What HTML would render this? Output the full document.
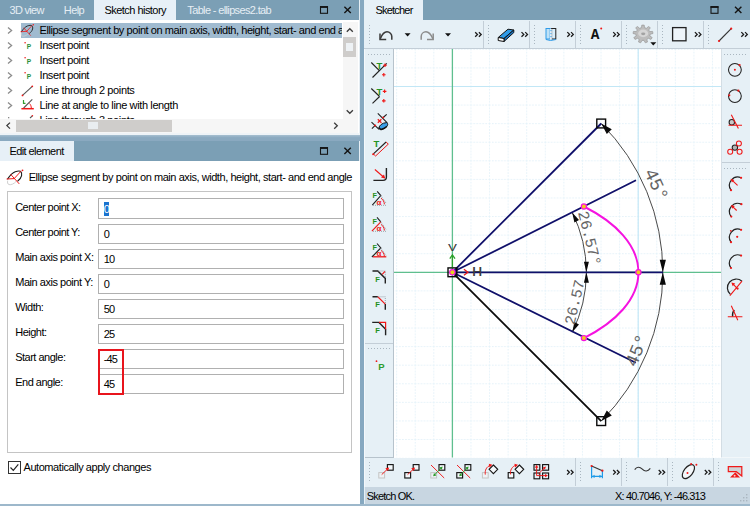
<!DOCTYPE html>
<html><head><meta charset="utf-8"><title>Sketcher</title>
<style>
html,body{margin:0;padding:0}
body{width:750px;height:506px;position:relative;overflow:hidden;background:#86a8c0;font-family:"Liberation Sans",sans-serif;font-size:11px;color:#000}
.a{position:absolute}
.t{position:absolute;white-space:nowrap;line-height:14px;height:14px;font-size:11px;letter-spacing:-0.44px}
.tabbar{position:absolute;background:#7b9fb5;height:20px}
.sel{position:absolute;top:0;height:20px;background:#e7f0f7}
.lt{color:#e6eef4}
.inp{position:absolute;left:98px;width:245.5px;height:20px;box-sizing:border-box;border:1px solid #b0b0b0;background:#fff}
svg{position:absolute;left:0;top:0;overflow:visible}
</style></head><body>

<!-- ============ LEFT TOP: tab bar + tree ============ -->
<div class="a" style="left:358.5px;top:0;width:1.9px;height:504px;background:#e6eef4"></div>
<div class="tabbar" style="left:0;top:0;width:358.5px"></div>
<div class="sel" style="left:94px;width:82px"></div>
<div class="t lt" style="left:9.6px;top:3px;letter-spacing:-0.73px">3D view</div>
<div class="t lt" style="left:63.8px;top:3px;letter-spacing:-0.61px">Help</div>
<div class="t" style="left:104.5px;top:3px;letter-spacing:-0.54px">Sketch history</div>
<div class="t lt" style="left:187.3px;top:3px;letter-spacing:-0.64px">Table - ellipses2.tab</div>

<div class="a" style="left:0;top:20px;width:358.6px;height:113px;background:#fff"></div>
<div class="a" style="left:21px;top:23px;width:321px;height:15px;background:#a0bbd0"></div>
<div class="a" style="left:39px;top:23px;width:303px;height:15px;overflow:hidden"><div class="t" style="left:0.5px;top:-0.5px;letter-spacing:-0.44px">Ellipse segment by point on main axis, width, height, start- and end angle</div></div>
<div class="t" style="left:39.5px;top:37.5px;letter-spacing:-0.41px">Insert point</div>
<div class="t" style="left:39.5px;top:52.5px;letter-spacing:-0.41px">Insert point</div>
<div class="t" style="left:39.5px;top:67.5px;letter-spacing:-0.41px">Insert point</div>
<div class="t" style="left:39.5px;top:82.5px;letter-spacing:-0.37px">Line through 2 points</div>
<div class="t" style="left:39.5px;top:97.5px;letter-spacing:-0.38px">Line at angle to line with length</div>
<div class="a" style="left:0;top:113px;width:342px;height:6px;overflow:hidden"><div class="t" style="left:39.5px;top:0.3px;letter-spacing:-0.37px">Line through 3 points</div></div>

<!-- scrollbars -->
<div class="a" style="left:343px;top:22px;width:15px;height:97px;background:#f6f6f6"></div>
<div class="a" style="left:343px;top:37px;width:13px;height:20px;background:#cfcdcb"></div>
<div class="a" style="left:346px;top:43px;width:7px;height:8px;background:#eef2f5"></div>
<div class="a" style="left:0;top:118.8px;width:358px;height:14.2px;background:#f6f6f6"></div>
<div class="a" style="left:16px;top:119.5px;width:156px;height:12.2px;background:#cfcdcb"></div>
<div class="a" style="left:88px;top:121.5px;width:10px;height:7.5px;background:#e9edf0"></div>

<!-- splitter -->
<div class="a" style="left:0;top:133px;width:360.4px;height:3px;background:#eef3f7"></div>
<div class="a" style="left:0;top:135.4px;width:360.4px;height:5.6px;background:linear-gradient(#a6bfd0,#8aa9c0 45%)"></div>

<!-- ============ EDIT ELEMENT ============ -->
<div class="tabbar" style="left:0;top:141px;width:358.5px"></div>
<div class="sel" style="left:0;top:141px;width:74px"></div>
<div class="t" style="left:9.4px;top:144px;letter-spacing:-0.57px">Edit element</div>
<div class="a" style="left:0;top:161px;width:359.6px;height:343px;background:#fff"></div>
<div class="t" style="left:28.7px;top:169.5px;letter-spacing:-0.44px">Ellipse segment by point on main axis, width, height, start- and end angle</div>
<div class="a" style="left:7px;top:191px;width:345px;height:262px;box-sizing:border-box;border:1px solid #c4c4c4"></div>

<div class="t" style="left:15.2px;top:199.5px;letter-spacing:-0.53px">Center point X:</div>
<div class="t" style="left:15.2px;top:224.5px;letter-spacing:-0.53px">Center point Y:</div>
<div class="t" style="left:15.2px;top:249.5px;letter-spacing:-0.47px">Main axis point X:</div>
<div class="t" style="left:15.2px;top:274.5px;letter-spacing:-0.47px">Main axis point Y:</div>
<div class="t" style="left:15.2px;top:299.5px;letter-spacing:-0.5px">Width:</div>
<div class="t" style="left:15.2px;top:324.5px;letter-spacing:-0.5px">Height:</div>
<div class="t" style="left:15.2px;top:349.5px;letter-spacing:-0.5px">Start angle:</div>
<div class="t" style="left:15.2px;top:374.5px;letter-spacing:-0.5px">End angle:</div>

<div class="inp" style="top:198px;height:21px"></div>
<div class="inp" style="top:224px"></div>
<div class="inp" style="top:249px"></div>
<div class="inp" style="top:274px"></div>
<div class="inp" style="top:299px"></div>
<div class="inp" style="top:324px"></div>
<div class="inp" style="top:349px"></div>
<div class="inp" style="top:374px"></div>
<div class="a" style="left:103.5px;top:202px;width:5px;height:13.5px;background:#1a74d0"></div>
<div class="t" style="left:103.7px;top:201.5px;color:#fff;letter-spacing:-0.8px">0</div>
<div class="t" style="left:103.7px;top:226.5px;letter-spacing:-0.8px">0</div>
<div class="t" style="left:103.7px;top:251.5px;letter-spacing:-0.8px">10</div>
<div class="t" style="left:103.7px;top:276.5px;letter-spacing:-0.8px">0</div>
<div class="t" style="left:103.7px;top:301.5px;letter-spacing:-0.8px">50</div>
<div class="t" style="left:103.7px;top:326.5px;letter-spacing:-0.8px">25</div>
<div class="t" style="left:103.7px;top:351.5px;letter-spacing:-0.8px">-45</div>
<div class="t" style="left:103.7px;top:376.5px;letter-spacing:-0.8px">45</div>
<div class="a" style="left:97.5px;top:348.5px;width:26px;height:46px;box-sizing:border-box;border:2px solid #e8141c"></div>

<div class="a" style="left:8px;top:461px;width:13px;height:13px;box-sizing:border-box;border:1px solid #333;background:#fff"></div>
<div class="t" style="left:23.5px;top:460px;letter-spacing:-0.44px">Automatically apply changes</div>

<!-- ============ RIGHT PANEL ============ -->
<div class="a" style="left:364px;top:0;width:386px;height:504px;background:#e6f0f6"></div>
<div class="tabbar" style="left:365px;top:0;width:385px"></div>
<div class="sel" style="left:365px;width:58px"></div>
<div class="t" style="left:375.5px;top:3px;letter-spacing:-0.8px">Sketcher</div>
<!-- canvas -->
<div class="a" style="left:394px;top:49px;width:327px;height:408.5px;background:#fff"></div>
<!-- status bar -->
<div class="a" style="left:365px;top:487px;width:385px;height:17px;background:#c8d6e1"></div>
<div class="t" style="left:366.8px;top:489px;letter-spacing:-0.83px">Sketch OK.</div>
<div class="t" style="left:615.1px;top:489px;letter-spacing:-0.88px">X: 40.7046, Y: -46.313</div>
<!-- bottom strip -->
<div class="a" style="left:0;top:504px;width:750px;height:2px;background:#9db8cb"></div>

<svg width="750" height="506" viewBox="0 0 750 506" font-family="Liberation Sans, sans-serif">
<defs>
  <pattern id="grid" x="451.9" y="271.8" width="18.58" height="18.58" patternUnits="userSpaceOnUse">
    <path d="M0 0.5H18.58M0.5 0V18.58" stroke="#e2f1f9" stroke-width="1" stroke-dasharray="1.5 1.5" fill="none"/>
  </pattern>
  <clipPath id="cv"><rect x="394" y="49" width="327" height="408.5"/></clipPath>
  <g id="icoEll" fill="none" stroke-linecap="round">
    <path d="M7.7 178.9C10 175.5 12.5 172.8 15.2 171.8C17.5 171 19.5 170.9 20.4 171.3C21.8 172.3 21.9 174 21.6 175.6C21 178 19.5 179.8 17.8 181" stroke="#1a1a1a" stroke-width="1.1"/>
    <path d="M16 181.5C14 184 11 185 9 184.6C7.5 184 7.3 182.5 7.6 181" stroke="#d0d0d0" stroke-width="1"/>
    <path d="M20.7 171.5L14.2 178.6M7 179L14.2 178.6M10.7 174.4L19 183.6" stroke="#f01818" stroke-width="1"/>
    <circle cx="22.5" cy="170.3" r="0.9" fill="#f01818" stroke="none"/>
  </g>
  <g id="maxi" fill="none" stroke="#141414"><rect x="0.5" y="0.5" width="7" height="6.5" stroke-width="1.1"/><path d="M0 0.7H8" stroke-width="1.8"/></g>
  <g id="clos" fill="none" stroke="#141414" stroke-width="1.4"><path d="M0 0L6.4 6.2M6.4 0L0 6.2"/></g>
  <g id="chev" fill="none" stroke="#8c8c8c" stroke-width="1.3"><path d="M0 -3L3.6 0L0 3"/></g>
  <g id="more" fill="none" stroke="#1a1a1a" stroke-width="1.3"><path d="M-3.5 -2.3L-1.2 0L-3.5 2.3M0.2 -2.3L2.5 0L0.2 2.3"/></g>
  <g id="hdlV" fill="#a9b6c0"><rect x="0" y="0" width="1" height="1"/><rect x="0" y="3" width="1" height="1"/><rect x="0" y="6" width="1" height="1"/><rect x="0" y="9" width="1" height="1"/><rect x="0" y="12" width="1" height="1"/><rect x="0" y="15" width="1" height="1"/><rect x="0" y="18" width="1" height="1"/></g>
  <g id="hdlH" fill="#a9b6c0"><rect x="0" y="0" width="1" height="1"/><rect x="3" y="0" width="1" height="1"/><rect x="6" y="0" width="1" height="1"/><rect x="9" y="0" width="1" height="1"/><rect x="12" y="0" width="1" height="1"/><rect x="15" y="0" width="1" height="1"/><rect x="18" y="0" width="1" height="1"/><rect x="21" y="0" width="1" height="1"/></g>
</defs>

<!-- tab bar icons -->
<use href="#maxi" x="320" y="6.3"/><use href="#clos" x="344.4" y="6.7"/>
<use href="#maxi" x="320" y="147.3"/><use href="#clos" x="344.4" y="147.7"/>
<use href="#maxi" x="710.5" y="6.3"/><use href="#clos" x="735" y="6.7"/>

<!-- tree chevrons -->
<use href="#chev" x="8" y="30.5"/><use href="#chev" x="8" y="45.5"/><use href="#chev" x="8" y="60.5"/><use href="#chev" x="8" y="75.5"/><use href="#chev" x="8" y="90.5"/><use href="#chev" x="8" y="105.5"/>
<rect x="8" y="117" width="1.3" height="1.3" fill="#8a8a8a"/>
<!-- scrollbar arrows -->
<g fill="none" stroke="#3c3c3c" stroke-width="1.3">
<path d="M346.8 31.8L349.8 28.7L352.8 31.8"/>
<path d="M346.7 110.2L349.8 113.3L352.9 110.2"/>
<path d="M10 122.6L6.9 125.6L10 128.6"/>
<path d="M334.2 122.7L337.3 125.7L334.2 128.7"/>
</g>

<!-- tree icons -->
<g transform="translate(15.3 -111.5) scale(0.8)"><use href="#icoEll"/></g>
<g font-size="6.6" font-weight="bold" fill="#2a903a">
<circle cx="25.1" cy="42.7" r="0.8" fill="#f01818"/><text x="26.8" y="48.6">P</text>
<circle cx="25.1" cy="57.7" r="0.8" fill="#f01818"/><text x="26.8" y="63.6">P</text>
<circle cx="25.1" cy="72.7" r="0.8" fill="#f01818"/><text x="26.8" y="78.6">P</text>
</g>
<path d="M22.5 95.4L32.3 86.3" stroke="#555" stroke-width="1.1"/>
<circle cx="22.5" cy="95.4" r="0.9" fill="#f01818"/><circle cx="32.3" cy="86.3" r="0.9" fill="#f01818"/>
<path d="M23.6 108L32.3 99.3" stroke="#555" stroke-width="1.1"/>
<path d="M21.4 108.7H33.8" stroke="#f01818" stroke-width="1.5"/>
<path d="M29.5 103.5C30.8 104.8 31.3 106.5 31.3 108" stroke="#f01818" stroke-width="1" fill="none"/>
<path d="M23.5 100V103.3H25.5" stroke="#2e9c2e" stroke-width="1.2" fill="none"/>
<path d="M30 118L32.4 115.8" stroke="#555" stroke-width="1.1"/><circle cx="32.4" cy="115.8" r="0.8" fill="#f01818"/>

<!-- edit element icon -->
<use href="#icoEll"/>
<!-- checkbox tick -->
<path d="M10.5 467.5L13.3 470.3L18.3 464.3" fill="none" stroke="#222" stroke-width="1.2"/>
<!-- ===== top toolbar ===== -->
<path d="M364 48.5H750" stroke="#c3ced7" stroke-width="1"/>
<g stroke="#c3ced7" stroke-width="1"><path d="M483.5 21V48M529.5 21V48M575.5 21V48M621.5 21V48M657.5 21V48M703.5 21V48"/></g>
<use href="#hdlV" x="369" y="25"/><use href="#hdlV" x="488" y="25"/><use href="#hdlV" x="534" y="25"/><use href="#hdlV" x="580" y="25"/><use href="#hdlV" x="626" y="25"/><use href="#hdlV" x="662" y="25"/><use href="#hdlV" x="708" y="25"/>
<!-- undo / redo -->
<g fill="none" stroke="#3a3a3a" stroke-width="1.5">
<path d="M391.8 39.8V36.6A4.8 4.8 0 0 0 387 31.8C384 31.8 382 34.5 380.3 38.8"/><path d="M380 33.4V39.5H386.2"/>
</g>
<g fill="none" stroke="#8c8c8c" stroke-width="1.5">
<path d="M421.2 39.8V36.6A4.8 4.8 0 0 1 426 31.8C429 31.8 431 34.5 432.9 38.8"/><path d="M433.2 33.4V39.5H427"/>
</g>
<path d="M404.6 33.2H410.6L407.6 36.4ZM445 33.2H451L448 36.4Z" fill="#111"/>
<use href="#more" x="478.7" y="34.5"/>
<!-- eraser -->
<path d="M508 29.2L513.8 30L504 38.5L498.2 37.5Z" fill="#2f9be8" stroke="#111" stroke-width="1" stroke-linejoin="round"/>
<path d="M504 38.5L513.8 30V32.6L504 41.5Z" fill="#1b78c8" stroke="#111" stroke-width="1" stroke-linejoin="round"/>
<path d="M498.2 37.5L504 38.5V41.5L498.2 40.5Z" fill="#fff" stroke="#111" stroke-width="1" stroke-linejoin="round"/>
<use href="#more" x="525" y="34.4"/>
<!-- book -->
<rect x="546" y="28.5" width="4.2" height="10.5" fill="#bfe2f7" stroke="#2f9be8" stroke-width="1"/>
<rect x="551.6" y="28.5" width="4.2" height="10.5" fill="#d9eefb" stroke="#222" stroke-width="1"/>
<path d="M551 29V40" stroke="#fff" stroke-width="1.6"/><path d="M551 30V39.5" stroke="#2f9be8" stroke-width="1" stroke-dasharray="1.2 1.8"/>
<path d="M546 39.5L550.5 40.5L556 39.5" stroke="#2f9be8" stroke-width="1" fill="none"/>
<use href="#more" x="570.8" y="34.4"/>
<!-- A -->
<text x="595.2" y="39.3" font-size="14.5" font-weight="bold" font-family="Liberation Mono, monospace" text-anchor="middle" fill="#111">A</text>
<circle cx="601.2" cy="28.6" r="1" fill="#f01818"/>
<use href="#more" x="616.7" y="34.4"/>
<!-- gear -->
<g transform="translate(643 34)">
<path d="M-1.5 -6.4L-1.2 -8.9L1.2 -8.9L1.5 -6.4L3.4 -5.7L5.5 -7.5L7.3 -6.2L5.7 -4.0L6.7 -2.4L9.6 -2.6L10.0 -0.5L7.2 0.2L6.8 2.0L9.2 3.5L8.0 5.4L5.4 4.3L3.8 5.5L4.5 8.0L2.3 8.8L1.0 6.4L-1.0 6.4L-2.3 8.8L-4.5 8.0L-3.8 5.5L-5.4 4.3L-8.0 5.4L-9.2 3.5L-6.8 2.0L-7.2 0.2L-10.0 -0.5L-9.6 -2.6L-6.7 -2.4L-5.7 -4.0L-7.3 -6.2L-5.5 -7.5L-3.4 -5.7Z" fill="#bdbdbd" stroke="#9a9a9a" stroke-width="0.7" stroke-linejoin="round"/>
<ellipse cx="0.2" cy="-0.6" rx="5" ry="3.8" fill="#d6d6d6"/><ellipse cx="0.2" cy="-0.2" rx="2.1" ry="1.4" fill="#a2a2a2"/>
</g>
<path d="M650.3 42.2H656.3L653.3 45.4Z" fill="#111"/>
<!-- square -->
<rect x="672.6" y="27.6" width="13.4" height="13.2" fill="#eef5fa" stroke="#222" stroke-width="1.3"/>
<use href="#more" x="698.4" y="34.4"/>
<!-- line -->
<path d="M719 41L731.2 28.7" stroke="#333" stroke-width="1.1"/><circle cx="719" cy="41" r="1.1" fill="#f01818"/><circle cx="731.2" cy="28.7" r="1.1" fill="#f01818"/>
<use href="#more" x="744.8" y="34.4"/>

<!-- ===== left toolbar ===== -->
<path d="M393.5 49V457.5M365 457.5H394" stroke="#b7c3cc" stroke-width="1" fill="none"/>
<path d="M364.5 49V487" stroke="#f4f8fb" stroke-width="1"/>
<use href="#hdlH" x="368" y="54"/>
<g fill="none" stroke="#222" stroke-width="1.15" font-weight="bold">
<!-- 1 -->
<path d="M371.3 62.5L379.6 70.8M372.5 77.5L386.7 63.3"/>
<path d="M383.2 65.2H386.8M385 63.4V67M382 74.7H385.6M383.8 72.9V76.5" stroke="#f01818"/>
<text x="376.6" y="68.6" font-size="9.5" fill="#259425" stroke="none">T</text>
<!-- 2 -->
<path d="M371.3 88.5L379.6 96.5M372.5 103.4L379.6 96.5"/>
<path d="M382.8 91.3H386.4M384.6 89.5V93.1M382 100.8H385.6M383.8 99V102.6" stroke="#f01818"/>
<text x="376.6" y="94.7" font-size="9.5" fill="#259425" stroke="none">T</text>
<!-- 3 -->
<path d="M377.8 113.3L387.3 122.8M386.7 114.3L383.2 117.5M371.5 122.2L379 129.3M371.9 128.7L375.5 125.2"/>
<path d="M377.8 119.2L381.4 122.8M381.4 119.2L377.8 122.8" stroke="#f01818" stroke-width="1.3"/>
<path d="M379 127.5C379.5 125.5 381.5 124 383.5 123.2L386.8 122.6C388 123.5 388 125 387 126.2C385.5 128 383 129.4 380.5 129.6C379.4 129.4 379 128.6 379 127.5Z" fill="#3a9ee8" stroke="#111" stroke-width="1"/>
<path d="M379 127.5C379.6 128.6 380.2 129.2 381.2 129.5C383 129 385.5 127.8 387 126.2" fill="none" stroke="#111" stroke-width="1.4"/>
<circle cx="383.2" cy="117.5" r="1" fill="#f01818" stroke="none"/><circle cx="375.1" cy="125.6" r="1" fill="#f01818" stroke="none"/>
<!-- 4 -->
<path d="M373.4 153.9L386.1 142"/>
<path d="M373.4 153.9L375.6 156L388.3 144.1L386.1 142" stroke="#f01818" stroke-width="1"/>
<circle cx="373.1" cy="154.2" r="1" fill="#f01818" stroke="none"/>
<text x="373.4" y="147" font-size="9.5" fill="#259425" stroke="none">T</text>
<!-- 5 fillet -->
<path d="M386.4 168V177A3.4 3.4 0 0 1 383 180.4H373.4" stroke-width="1.4"/>
<path d="M374.9 169.5L384.6 178" stroke="#f01818" stroke-width="1.1"/><path d="M385.2 178.6L381 177.6L384 174.5Z" fill="#f01818" stroke="none"/>
<!-- 6 -->
<path d="M377.2 191.4L380.8 195.6L372.3 205.1"/>
<path d="M380.8 195.6L386.3 203.5M373 205.3H386.5" stroke="#9aa4ac" stroke-width="1" stroke-dasharray="1 1"/>
<path d="M381 198.2C383 199.5 384.3 201.8 384.4 204.3" stroke="#f01818" stroke-width="1"/>
<text x="376.6" y="204.8" font-size="8" fill="#f01818" stroke="none">α</text>
<text x="372.6" y="198.2" font-size="7.3" fill="#1f8f1f" stroke="none">F</text>
<!-- 7 -->
<path d="M377 217.4L380.8 221.9"/>
<path d="M380.8 221.9L371.9 231.1" stroke="#f01818"/>
<path d="M380.8 221.9L386.3 229.8M373 231.3H386.5" stroke="#9aa4ac" stroke-width="1" stroke-dasharray="1 1"/>
<path d="M381 224.4C383 225.7 384.3 228 384.4 230.5" stroke="#f01818" stroke-width="1"/>
<text x="376.6" y="231" font-size="8" fill="#f01818" stroke="none">α</text>
<text x="372.6" y="223.8" font-size="7.3" fill="#1f8f1f" stroke="none">F</text>
<!-- 8 -->
<path d="M377 243.5L380.8 248L371.9 257"/>
<path d="M380.8 248L386.3 255.9" stroke="#9aa4ac" stroke-width="1" stroke-dasharray="1 1"/>
<path d="M373 256.8H386.3" stroke="#f01818" stroke-width="1.3"/>
<path d="M381 250.4C383 251.7 384.3 254 384.4 256.5" stroke="#f01818" stroke-width="1"/>
<text x="376.6" y="256.4" font-size="8" fill="#f01818" stroke="none">α</text>
<text x="372.6" y="249.9" font-size="7.3" fill="#1f8f1f" stroke="none">F</text>
<!-- 9 chamfer -->
<path d="M372.5 271H377.8L385.3 278.4V283.6" stroke-width="1.4"/>
<path d="M378.5 271H385.3V278" stroke="#9aa4ac" stroke-width="1" stroke-dasharray="1 1"/>
<path d="M385 271.3L382.2 274.4" stroke="#f01818" stroke-width="1.1"/>
<text x="375.3" y="281.6" font-size="7.6" fill="#1f8f1f" stroke="none">F</text>
<!-- 10 -->
<path d="M372.5 296.8H377.8M385.3 304.1V309.7" stroke-width="1.4"/>
<path d="M377.8 296.8L385.3 304.1" stroke="#f01818" stroke-width="1.2"/>
<path d="M378.5 296.8H385.3V303.5" stroke="#9aa4ac" stroke-width="1" stroke-dasharray="1 1"/>
<text x="375.3" y="307" font-size="7.6" fill="#1f8f1f" stroke="none">F</text>
<!-- 11 -->
<path d="M372.2 322.4H379L385.6 329.2V335.3" stroke-width="1.4"/>
<path d="M379 322.4H385.6V329.2" stroke="#f01818" stroke-width="1.2"/>
<text x="375.3" y="333" font-size="7.6" fill="#1f8f1f" stroke="none">F</text>
</g>
<path d="M365 343.5H393" stroke="#c3ced7" stroke-width="1"/>
<use href="#hdlH" x="368" y="348"/>
<circle cx="376.5" cy="361.2" r="0.9" fill="#f01818"/>
<text x="378.3" y="370" font-size="9.5" font-weight="bold" fill="#2e9c2e">P</text>
<!-- ===== right toolbar ===== -->
<path d="M721.5 49V457" stroke="#d3dde4" stroke-width="1" fill="none"/><path d="M722 457.5H750" stroke="#f2f7fa" stroke-width="1"/>
<use href="#hdlH" x="724" y="54"/>
<g fill="none" stroke="#222" stroke-width="1.05">
<circle cx="734.9" cy="69.8" r="6.4"/>
<circle cx="734.9" cy="96.1" r="6.4"/>
<circle cx="731.8" cy="122.2" r="2.7" fill="#c8c8c8"/>
<path d="M728.5 125.2H742M731.3 114.8L738.4 128.6" stroke="#f01818" stroke-width="1.1"/>
<circle cx="734.9" cy="147.6" r="2.7" fill="#b5b5b5"/>
<g stroke="#f01818"><circle cx="738.9" cy="143.5" r="2.5"/><circle cx="730.2" cy="151.8" r="2.5"/><circle cx="739.6" cy="151.8" r="2.5"/></g>
</g>
<g fill="#f01818"><circle cx="734.9" cy="69.8" r="1"/><circle cx="739.6" cy="65.1" r="1.1"/><circle cx="738.4" cy="90.7" r="1.1"/><circle cx="729.3" cy="95.3" r="1.1"/></g>
<path d="M722 162.5H750" stroke="#c3ced7" stroke-width="1"/>
<use href="#hdlH" x="724" y="168"/>
<!-- arcs -->
<g fill="none" stroke="#222" stroke-width="1.2">
<path id="arcI" d="M741.1 177.8A8.3 8.3 0 0 0 731 190.2"/>
<use href="#arcI" y="26.3"/><use href="#arcI" y="52"/><use href="#arcI" y="77.8"/>
<path d="M742 281.2A8.6 8.6 0 0 0 730.4 294.4"/>
<path d="M734.3 310C732.8 311.8 732.2 314.3 732.6 316.6" stroke-width="1.3"/>
</g>
<g stroke="#f01818" stroke-width="1.1" fill="none">
<path d="M737.6 185.4L731.4 179.6"/><path d="M736.7 210.5L731.8 205.8"/>
<path d="M742 281.2L729.9 295.6M737.6 288.9L732.2 283.2"/>
<path d="M727.8 316.8H742.4M731.3 305.8L737.8 320.2"/>
</g>
<g fill="#f01818">
<path d="M730.6 178.8L734.4 179.9L731.9 182.6Z"/><path d="M731 205L734.8 206.1L732.3 208.8Z"/><path d="M731.4 282.4L735.2 283.5L732.7 286.2Z"/>
<circle cx="741.1" cy="177.8" r="1.1"/><circle cx="731" cy="190.2" r="1.1"/>
<circle cx="741.4" cy="204.2" r="1.1"/><circle cx="731.3" cy="216.6" r="1.1"/>
<circle cx="741.1" cy="229.8" r="1.1"/><circle cx="731" cy="242.2" r="1.1"/><circle cx="737.2" cy="236.8" r="1.1"/><circle cx="730.8" cy="230.8" r="0.9"/>
<circle cx="741.1" cy="255.6" r="1.1"/><circle cx="731" cy="268" r="1.1"/>
<circle cx="737.6" cy="288.6" r="1.1"/>
</g>

<!-- ===== bottom toolbar ===== -->
<g stroke="#c3ced7" stroke-width="1"><path d="M575.5 458V486M621.5 458V486M667.5 458V486M713.5 458V486"/></g>
<use href="#hdlV" x="369" y="462"/><use href="#hdlV" x="580" y="462"/><use href="#hdlV" x="626" y="462"/><use href="#hdlV" x="672" y="462"/><use href="#hdlV" x="718" y="462"/>
<g fill="none" stroke="#161616" stroke-width="1.15">
<!-- move -->
<rect x="378.8" y="472.6" width="5.8" height="5.4" stroke="#c4c4c4" stroke-width="1" fill="#eef2f5"/>
<rect x="387.4" y="464.6" width="5.8" height="5.6" fill="#f4f8fb"/>
<!-- copy -->
<rect x="404.8" y="472.6" width="5.8" height="5.4" fill="#f4f8fb"/>
<rect x="413.2" y="464.6" width="5.8" height="5.6" fill="#f4f8fb"/>
<!-- mirror -->
<rect x="430.8" y="472.6" width="5.8" height="5.4" stroke="#c4c4c4" stroke-width="1" fill="#eef2f5"/>
<rect x="439" y="464.6" width="5.8" height="5.6" fill="#f4f8fb"/>
<!-- mirror copy -->
<rect x="456.8" y="472.6" width="5.8" height="5.4" fill="#f4f8fb"/>
<rect x="465" y="464.6" width="5.8" height="5.6" fill="#f4f8fb"/>
<!-- rotate -->
<rect x="482.4" y="472.6" width="5.8" height="5.4" stroke="#c4c4c4" stroke-width="1" fill="#eef2f5"/>
<path d="M493.4 465L497.7 469.3L493.4 473.6L489.1 469.3Z" stroke-width="1.1" fill="#f4f8fb"/>
<!-- rotate copy -->
<rect x="508.2" y="472.6" width="5.6" height="5.4" fill="#f4f8fb"/>
<path d="M519.4 465L523.7 469.3L519.4 473.6L515.1 469.3Z" stroke-width="1.1" fill="#f4f8fb"/>
<!-- pattern -->
<rect x="534" y="464.6" width="5.8" height="5.6"/><rect x="542.6" y="464.6" width="6" height="5.6"/><rect x="534" y="473" width="5.8" height="5.8"/><rect x="542.6" y="473" width="6" height="5.8"/>
</g>
<g stroke="#f01818" stroke-width="0.95" fill="none">
<path d="M381.7 474.6L388 468.6"/><path d="M407.6 474.6L413.9 468.6"/>
<path d="M431 465L444.2 478"/><path d="M457 465L470.2 478"/>
<path d="M485.3 474.6C484.6 470.5 486.5 466.6 490.4 465.3"/><path d="M510.6 474.4C509.8 470.4 512 466.4 516 465.2"/>
<path d="M536.6 475.6V466.5M536.6 475.6H546.5M538.5 473.8L545 467.4"/>
</g>
<g fill="#f01818">
<path d="M389.2 467.5L387.9 471L385.3 468.3Z"/><path d="M415.1 467.5L413.8 471L411.2 468.3Z"/>
<path d="M492.4 464.8L489.6 467.5L488.8 463.8Z"/><path d="M518 464.7L515.2 467.4L514.4 463.7Z"/>
<path d="M536.6 464.8L538.3 467.8H534.9Z"/><path d="M548 475.6L545 477.3V473.9Z"/><path d="M546 466.4L544.9 469.5L542.8 467.4Z"/>
</g>
<g stroke="#2a9a2a" stroke-width="0.95" fill="#2a9a2a">
<path d="M434.2 475.2L441.6 467.6"/><path d="M433.2 476.2L436.4 475.4L434 473Z" stroke="none"/><path d="M442.6 466.6L439.4 467.4L441.8 469.8Z" stroke="none"/>
<path d="M460.2 475.2L467.6 467.6"/><path d="M459.2 476.2L462.4 475.4L460 473Z" stroke="none"/><path d="M468.6 466.6L465.4 467.4L467.8 469.8Z" stroke="none"/>
</g>
<use href="#more" x="570.6" y="472.3"/>
<!-- dimension -->
<path d="M591.6 466V478.2M602.4 470.7V478.2M591.6 476.4H602.4" stroke="#1e9be8" stroke-width="1.2" fill="none"/>
<path d="M592 476.4L594.6 474.8V478ZM602 476.4L599.4 474.8V478Z" fill="#1e9be8"/>
<path d="M591.6 466L602.4 470.7" stroke="#333" stroke-width="1.1"/>
<circle cx="591.6" cy="466" r="1.1" fill="#f01818"/><circle cx="602.4" cy="470.7" r="1.1" fill="#f01818"/>
<use href="#more" x="616.7" y="472.3"/>
<path d="M634.7 469.6C636.8 466.6 639.6 466.4 642.3 469.2C644.8 471.8 647.8 471.6 650.3 468.4" stroke="#333" stroke-width="1.1" fill="none"/>
<use href="#more" x="662.2" y="472.3"/>
<ellipse cx="688.4" cy="471.6" rx="8.2" ry="4.4" transform="rotate(-52 688.4 471.6)" fill="#f4f8fb" stroke="#222" stroke-width="1.2"/>
<g fill="#f01818"><circle cx="691.1" cy="464" r="1"/><circle cx="696.4" cy="464.8" r="1"/><circle cx="687.5" cy="473.1" r="1"/></g>
<use href="#more" x="708.3" y="472.3"/>
<!-- hatch -->
<path d="M728.3 466.6H741.8V476L736.3 471.7H728.3Z" fill="#cfd3d6" stroke="#f01818" stroke-width="1.2" stroke-linejoin="miter"/>
<path d="M730 477.5L735.3 472.3L740 477.5Z" fill="#f01818"/>
<circle cx="734.6" cy="475.8" r="1" fill="#f6c9c9"/>
<!-- size grip -->
<g fill="#aab6c0"><rect x="746" y="500" width="1.4" height="1.4"/><rect x="743" y="500" width="1.4" height="1.4"/><rect x="746" y="497" width="1.4" height="1.4"/><rect x="740" y="500" width="1.4" height="1.4"/><rect x="743" y="497" width="1.4" height="1.4"/><rect x="746" y="494" width="1.4" height="1.4"/></g>
<!-- ===== canvas ===== -->
<g clip-path="url(#cv)">
<rect x="394" y="49" width="327" height="409" fill="url(#grid)"/>
<path d="M638.2 49V458M394 86.5H721" stroke="#c2e7f6" stroke-width="1.15"/>
<path d="M452.4 49V458M394 272.3H721" stroke="#5fbf8e" stroke-width="1.3"/>
<path d="M601.2 421.1A210.4 210.4 0 0 0 601.2 123.5M572.2 332.2A134 134 0 0 0 572.2 212.4" fill="none" stroke="#4a4a4a" stroke-width="1"/>
<path d="M601.2 123.5L611.8 129.2L606.8 134.1ZM601.2 421.1L606.8 410.5L611.8 415.4ZM662.8 272.3L665.9 284.8L659.7 284.8ZM662.8 272.3L659.7 259.8L665.9 259.8ZM572.2 212.4L579.0 220.1L574.4 222.5ZM572.2 332.2L574.4 322.1L579.0 324.5ZM586.4 272.3L588.9 282.8L583.9 282.8ZM586.4 272.3L583.9 261.8L588.9 261.8Z" fill="#0a0a0a"/>
<path d="M452.4 272.3L601.2 123.5M452.4 272.3L636 180.3M452.4 272.3H663M452.4 272.3L635.8 362.8" stroke="#10106a" stroke-width="1.8" fill="none"/>
<path d="M452.4 272.3L601.2 421.1" stroke="#0a0a0a" stroke-width="1.8"/>
<path d="M583.9 338.1A186.0 93.0 0 0 0 583.9 206.5" fill="none" stroke="#f513e0" stroke-width="2"/>
<rect x="596.8" y="119.1" width="8.8" height="8.8" fill="none" stroke="#0a0a0a" stroke-width="1.4"/>
<rect x="596.8" y="416.7" width="8.8" height="8.8" fill="none" stroke="#0a0a0a" stroke-width="1.4"/>
<rect x="448.0" y="267.9" width="8.8" height="8.8" fill="none" stroke="#0a0a0a" stroke-width="1.4"/>
<circle cx="583.9" cy="206.5" r="2.6" fill="#f2c81e" stroke="#f513e0" stroke-width="1.2"/>
<circle cx="583.9" cy="338.1" r="2.6" fill="#f2c81e" stroke="#f513e0" stroke-width="1.2"/>
<circle cx="638.4" cy="272.3" r="2.6" fill="#f2c81e" stroke="#f513e0" stroke-width="1.2"/>
<circle cx="452.4" cy="272.3" r="2.7" fill="#e8d020" stroke="#f513e0" stroke-width="1.1"/>
<path d="M452.4 267.3V255.3" stroke="#2aa02a" stroke-width="1.3"/><path d="M449.79999999999995 258.7L452.4 254.9L455.0 258.7" fill="none" stroke="#2aa02a" stroke-width="1.3"/>
<path d="M463.9 269.3L467.9 272.3L463.9 275.3" fill="none" stroke="#f01818" stroke-width="1.3"/>
<g font-family="Liberation Mono, monospace" fill="#3c3c3c">
<text transform="translate(452.4 250.5) scale(1.3 1)" font-size="11.5" text-anchor="middle">V</text>
<text transform="translate(477.2 276.1) scale(1.45 1)" font-size="12.5" text-anchor="middle">H</text>
<text transform="translate(651.1 187.1) rotate(65)" font-size="18.5" text-anchor="middle" fill="#646464">45°</text>
<text transform="translate(584.8 239.6) rotate(76)" font-size="15.5" text-anchor="middle" fill="#646464">26.57°</text>
<text transform="translate(579.4 303.4) rotate(-76.8)" font-size="15.2" text-anchor="middle" fill="#646464">26.57</text>
<text transform="translate(642.2 352.6) rotate(-68)" font-size="18.5" text-anchor="middle" fill="#646464">45°</text>
</g>
</g>
</svg>

</body></html>
